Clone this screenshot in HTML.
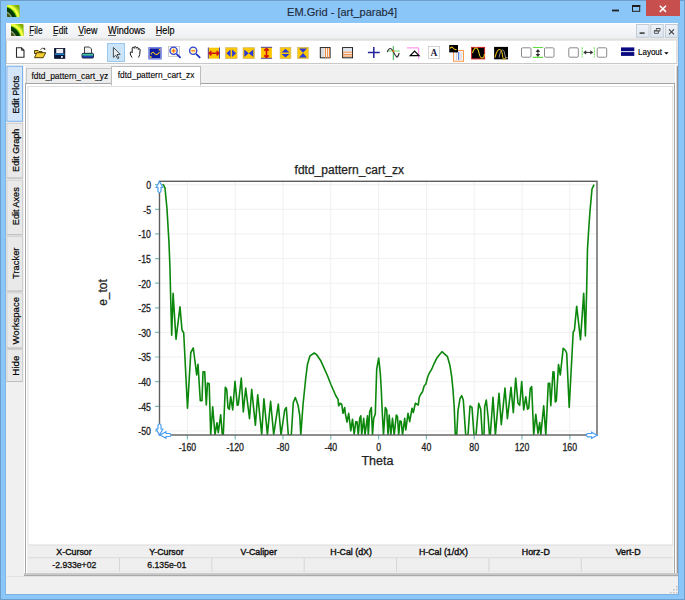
<!DOCTYPE html>
<html><head><meta charset="utf-8"><style>html,body{margin:0;padding:0;width:685px;height:600px;overflow:hidden;background:#8bc6f9;font-family:"Liberation Sans",sans-serif}</style></head><body><svg width="685" height="600" viewBox="0 0 685 600" font-family="Liberation Sans" style="position:absolute;left:0;top:0"><rect x="0" y="0" width="685" height="600" fill="#8bc6f9" /><rect x="0.5" y="0.5" width="684" height="599" fill="none" stroke="#6e9fcc" stroke-width="1" /><g transform="translate(7,5)"><clipPath id="ic5"><rect width="12.5" height="12" rx="0.8"/></clipPath><g clip-path="url(#ic5)"><rect width="13" height="12" fill="#84ac00"/><circle cx="-4" cy="15.5" r="19" fill="#a6d81c"/><circle cx="-4" cy="15.5" r="17.2" fill="#f4ff44"/><circle cx="-4" cy="15.5" r="14.6" fill="#5cc800"/><circle cx="-4" cy="15.5" r="13.5" fill="#063a06"/><circle cx="-4" cy="15.5" r="9.6" fill="#9cab84"/><circle cx="-4" cy="15.5" r="8.5" fill="#46560c"/></g></g><text transform="translate(342,15.8) scale(0.945,1)" font-size="11.7" fill="#1e2b3c" stroke="#1e2b3c" stroke-width="0.15" text-anchor="middle" font-weight="normal" >EM.Grid - [art_parab4]</text><rect x="612" y="9.6" width="7" height="1.8" fill="#202020" /><rect x="632.5" y="5.5" width="7.2" height="5.8" fill="none" stroke="#202020" stroke-width="1" /><rect x="632" y="5" width="8.2" height="2" fill="#202020" /><rect x="646" y="0" width="34" height="16" fill="#c7504f" /><path d="M659.8 5.8L666 11.9M666 5.8L659.8 11.9" stroke="#fff" stroke-width="1.5"/><rect x="6" y="23" width="672" height="571" fill="#f0f0f0" /><rect x="5" y="23" width="1" height="572" fill="#7fb5e8" /><rect x="678" y="23" width="1" height="572" fill="#7ab0e2" /><rect x="5" y="594" width="674" height="1" fill="#7ab0e2" /><defs><linearGradient id="mb" x1="0" y1="0" x2="0" y2="1"><stop offset="0" stop-color="#fbfbfc"/><stop offset="1" stop-color="#eef0f3"/></linearGradient><linearGradient id="mdi" x1="0" y1="0" x2="0" y2="1"><stop offset="0" stop-color="#eef3f9"/><stop offset="1" stop-color="#dde6f0"/></linearGradient></defs><rect x="6" y="23" width="672" height="15" fill="url(#mb)" /><rect x="6" y="23" width="672" height="1" fill="#ffffff" /><defs><linearGradient id="mbb" x1="0" y1="0" x2="0" y2="1"><stop offset="0" stop-color="#eeeeee"/><stop offset="1" stop-color="#d6d6d6"/></linearGradient></defs><rect x="6" y="37.7" width="672" height="3" fill="url(#mbb)" /><g transform="translate(11,24)"><clipPath id="ic24"><rect width="12.5" height="12" rx="0.8"/></clipPath><g clip-path="url(#ic24)"><rect width="13" height="12" fill="#84ac00"/><circle cx="-4" cy="15.5" r="19" fill="#a6d81c"/><circle cx="-4" cy="15.5" r="17.2" fill="#f4ff44"/><circle cx="-4" cy="15.5" r="14.6" fill="#5cc800"/><circle cx="-4" cy="15.5" r="13.5" fill="#063a06"/><circle cx="-4" cy="15.5" r="9.6" fill="#9cab84"/><circle cx="-4" cy="15.5" r="8.5" fill="#46560c"/></g></g><text transform="translate(29.3,34.1) scale(0.8,1)" font-size="10.2" fill="#000" stroke="#000" stroke-width="0.15" text-anchor="start" font-weight="normal" >File</text><text transform="translate(53,34.1) scale(0.84,1)" font-size="10.2" fill="#000" stroke="#000" stroke-width="0.15" text-anchor="start" font-weight="normal" >Edit</text><text transform="translate(78.3,34.1) scale(0.87,1)" font-size="10.2" fill="#000" stroke="#000" stroke-width="0.15" text-anchor="start" font-weight="normal" >View</text><text transform="translate(108,34.1) scale(0.9,1)" font-size="10.2" fill="#000" stroke="#000" stroke-width="0.15" text-anchor="start" font-weight="normal" >Windows</text><text transform="translate(155.8,34.1) scale(0.89,1)" font-size="10.2" fill="#000" stroke="#000" stroke-width="0.15" text-anchor="start" font-weight="normal" >Help</text><rect x="29.3" y="35" width="4" height="1" fill="#555" /><rect x="53" y="35" width="4" height="1" fill="#555" /><rect x="78.3" y="35" width="5.5" height="1" fill="#555" /><rect x="108" y="35" width="8" height="1" fill="#555" /><rect x="155.8" y="35" width="5" height="1" fill="#555" /><rect x="636.5" y="24.5" width="12.5" height="12.8" fill="url(#mdi)" stroke="#c3ccd6" stroke-width="1" /><rect x="650.8" y="24.5" width="12.5" height="12.8" fill="url(#mdi)" stroke="#c3ccd6" stroke-width="1" /><rect x="665.4" y="24.5" width="12.5" height="12.8" fill="url(#mdi)" stroke="#c3ccd6" stroke-width="1" /><rect x="639.6" y="32.3" width="5" height="1.6" fill="#404040" /><path d="M654.4 30.9h4v2.5h-4z M656.4 30.4v-1.9h3.6v2.6h-1.4" fill="none" stroke="#505050" stroke-width="0.9"/><path d="M654 30.2h4.8v1h-4.8zM656 28h4.4v1h-4.4z" fill="#505050"/><path d="M669 29.3L674 34.3M674 29.3L669 34.3" stroke="#404040" stroke-width="1.1"/><rect x="6" y="40.7" width="671" height="23" fill="#ffffff" /><rect x="6" y="63" width="671" height="1" fill="#c8c8c8" /><rect x="6" y="64" width="671" height="1" fill="#f8f8f8" /><rect x="6" y="40.7" width="0.8" height="23" fill="#c9c9c9" /><rect x="676.3" y="40.7" width="1" height="23" fill="#d0d0d0" /><g id="tb">
<!-- new doc 15.7..24.4, 47.3..57.8 -->
<path d="M16.5 47.8h5l2.5 2.5v7h-7.5z" fill="#fff" stroke="#2a2a2a" stroke-width="1.1"/>
<path d="M21.5 47.8v2.5h2.5" fill="none" stroke="#2a2a2a" stroke-width="0.9"/>
<!-- open folder 34..46, 47.7..58.2 -->
<path d="M34.5 50.5h3.5l1 1h3v2h-7.5z" fill="#f0c030" stroke="#3a3000" stroke-width="0.9"/>
<path d="M34.5 57.7l2.2-5h9l-2.5 5z" fill="#f5cf30" stroke="#3a3000" stroke-width="0.9"/>
<path d="M40.5 49.5q2-2.5 4.5-0.5" fill="none" stroke="#333" stroke-width="0.9"/>
<path d="M44.2 47.5l1.6 1.8-2 0.6z" fill="#333"/>
<!-- save 54.2..65.2, 48.1..58.6 -->
<rect x="54.6" y="48.5" width="10.2" height="9.8" fill="#08183a" stroke="#000820" stroke-width="0.8"/>
<rect x="56.2" y="48.9" width="7" height="4.3" fill="#eeeeee"/>
<rect x="55" y="53.6" width="9.4" height="1.2" fill="#2a9cf0"/>
<rect x="61" y="56" width="1.8" height="1.8" fill="#f4f4f4"/>
<!-- printer 81.5..93.9, 46.7..58.4 -->
<path d="M84.5 47h5l2 2v4.5h-7z" fill="#f4f4f4" stroke="#303030" stroke-width="0.9"/>
<rect x="82" y="53.3" width="11.5" height="4.8" rx="1" fill="#2040b0" stroke="#101030" stroke-width="0.8"/>
<rect x="82.5" y="53.8" width="10.5" height="1.8" fill="#40c890"/>
<!-- pointer button -->
<rect x="107.5" y="43.5" width="17" height="18" fill="#cce4f8" stroke="#99c8f0" stroke-width="1"/>
<path d="M113.4 47.4v10l2.3-2.2 2 3.5 1.3-0.7-2-3.4 3.2-0.3z" fill="#e6eef4" stroke="#3a3a3a" stroke-width="0.9" stroke-linejoin="round"/>
<!-- hand 129.8..142.1, 46.4..57.8 -->
<path d="M132 57.5q-1.8-2.5-1.8-4.5 0-1.3 1.2-1.2l0.8 1v-4.5q0.1-1.2 1-1.1 1 0 1 1.2v-0.8q0.1-1.1 1-1 1 0 1 1.1v0.6q0.2-1 1-1 1 0 1 1.2v1q0.2-0.9 1-0.8 1 0.1 0.9 1.3l-0.4 4.5q-0.4 1.6-1.3 3" fill="#fff" stroke="#1a1a1a" stroke-width="1" stroke-linejoin="round"/>
<!-- waveform 147.9..162, 46.7..59.8 -->
<rect x="148.3" y="47.1" width="13.4" height="12.4" fill="#5b6fe8"/>
<rect x="149.3" y="48.1" width="11.4" height="10.4" fill="#0a1aa0" stroke="#9aa4d8" stroke-width="0.8"/>
<path d="M151 54.5q1.5-3.5 3-1.5t3 1.5 2.5-2.5" fill="none" stroke="#f0c020" stroke-width="1.1"/>
<rect x="158.8" y="49" width="1.6" height="1.6" fill="#f0c020"/>
<rect x="150" y="56.2" width="1.6" height="1.6" fill="#f0c020"/>
<!-- zoom in 168..181 -->
<rect x="168.5" y="46.5" width="11" height="10" fill="none" stroke="#c8c8c8" stroke-width="0.9"/>
<line x1="176.5" y1="53.8" x2="180.6" y2="57.8" stroke="#1a30c0" stroke-width="1.7"/>
<circle cx="173.6" cy="50.8" r="3.6" fill="#fff8c0" stroke="#3040d8" stroke-width="1.3"/>
<path d="M171.6 50.8h4M173.6 48.8v4" stroke="#ff7010" stroke-width="1.3"/>
<!-- zoom out -->
<line x1="196.1" y1="53.8" x2="200.2" y2="57.8" stroke="#1a30c0" stroke-width="1.7"/>
<circle cx="193.2" cy="50.8" r="3.6" fill="#fff8c0" stroke="#3040d8" stroke-width="1.3"/>
<path d="M191.2 50.8h4" stroke="#ff8a30" stroke-width="1.5"/>
<!-- A 207.9..219.8 -->
<rect x="208" y="47.7" width="11.8" height="10.9" fill="#ffc800"/>
<path d="M208.3 47.5v11.2M219.5 47.5v11.2" stroke="#3838c0" stroke-width="0.9"/>
<path d="M209.5 53.2h9M211.3 51l-2 2.2 2 2.2M216.7 51l2 2.2-2 2.2" fill="none" stroke="#d01010" stroke-width="1.6"/>
<!-- B 225.5..237.1 -->
<rect x="225.5" y="47.7" width="11.6" height="10.9" fill="#ffc800" stroke="#c8b070" stroke-width="0.6"/>
<path d="M230.5 49.5v7.5l-4-3.75z M232.1 49.5v7.5l4-3.75z" fill="#2a3ad8"/>
<!-- C 243..254.6 -->
<rect x="243" y="47.7" width="11.6" height="10.9" fill="#ffc800" stroke="#c8b070" stroke-width="0.6"/>
<path d="M244.3 49.5v7.5l4.5-3.75z M253.3 49.5v7.5l-4.5-3.75z" fill="#2a3ad8"/>
<!-- D 261.1..271.9 -->
<rect x="261.1" y="47" width="10.8" height="11.6" fill="#ffc800"/>
<path d="M260.9 47.3h11.2M260.9 58.3h11.2" stroke="#3838c0" stroke-width="0.9"/>
<path d="M266.5 48.5v9M264.3 50.7l2.2-2 2.2 2M264.3 55.3l2.2 2 2.2-2" fill="none" stroke="#d01010" stroke-width="1.6"/>
<!-- E 280.1..290.9 -->
<rect x="280.1" y="47.3" width="10.8" height="11.3" fill="#ffc800" stroke="#c8b070" stroke-width="0.6"/>
<path d="M281.5 52.4h8l-4-3.6z M281.5 54h8l-4 3.6z" fill="#2a3ad8"/>
<!-- F 297.6..308.4 -->
<rect x="297.6" y="47.3" width="10.8" height="11.3" fill="#ffc800" stroke="#c8b070" stroke-width="0.6"/>
<path d="M299 48.5h8l-4 4.3z M299 57.4h8l-4-4.3z" fill="#2a3ad8"/>
<!-- G 319.8..330.4 -->
<rect x="320.3" y="47.6" width="9.8" height="10.2" fill="#f4f4f4" stroke="#202020" stroke-width="1"/>
<rect x="321" y="48.5" width="3.5" height="8.5" fill="#dcdcdc"/>
<path d="M325.5 48v10M327.6 48v10M329.5 48v10" stroke="#f08030" stroke-width="0.9"/>
<!-- H 342.1..353 -->
<rect x="342.6" y="47.6" width="9.9" height="10.2" fill="#f4f4f4" stroke="#202020" stroke-width="1"/>
<rect x="343.5" y="48.5" width="8.2" height="3" fill="#dde6ee"/>
<path d="M342.8 52.2h9.6M342.8 54.4h9.6M342.8 56.1h9.6" stroke="#f08030" stroke-width="0.9"/>
<!-- plus -->
<path d="M367.9 52.5h11.9M373.8 47v11" stroke="#23239a" stroke-width="1.5"/>
<!-- wave cross -->
<path d="M387.2 51h12.7" stroke="#70d870" stroke-width="1"/>
<path d="M393.3 46.1v14" stroke="#30b050" stroke-width="1"/>
<path d="M387.2 52q1.5-3.5 3-3.5t3 3q2 4 3.5 5.5 1.5 0 2.5-4" fill="none" stroke="#303030" stroke-width="1.1"/>
<rect x="392.5" y="50.2" width="1.8" height="1.8" fill="#ff7020"/>
<!-- triangle -->
<path d="M406.9 47.9h11.8v11" fill="none" stroke="#ff80f0" stroke-width="1"/>
<path d="M410.2 55.6l4.4-4.4 4.4 4.4z" fill="none" stroke="#000" stroke-width="1.2"/>
<!-- A box -->
<rect x="428.3" y="46.5" width="11.3" height="12" fill="#fff" stroke="#c0c0c0" stroke-width="0.7"/>
<text x="434" y="56.3" font-family="Liberation Serif" font-weight="bold" font-size="9.5" text-anchor="middle" fill="#1a2040">A</text>
<!-- icon 13 -->
<rect x="453.5" y="50.5" width="10" height="10.8" fill="#f4f6fa" stroke="#ff9a50" stroke-width="1"/>
<path d="M456.5 52v8M461 52v8" stroke="#d0d0d0" stroke-width="0.9"/>
<path d="M458.7 52v8" stroke="#4060e0" stroke-width="1"/>
<rect x="449.2" y="45" width="8.8" height="7.4" fill="#000"/>
<path d="M450 48.5q1.5-2.5 3-0.5t3.5 1.5" fill="none" stroke="#e8c020" stroke-width="1.1"/>
<!-- icon 14 -->
<rect x="471.6" y="47.4" width="13" height="11.5" fill="#000" stroke="#d02020" stroke-width="1"/>
<path d="M472.5 53q1.5-5 3.5-5t3 5 3 5 2.5-4" fill="none" stroke="#e8d020" stroke-width="1.1"/>
<!-- icon 15 -->
<rect x="494.1" y="46.9" width="13.9" height="12.4" fill="#000"/>
<path d="M499 57.5q1.5-7.5 3.5-7.5t2.5 5 2.5 2" fill="none" stroke="#909090" stroke-width="1"/>
<path d="M495 57.5q2-8 4.5-8t3 6 3.5 2" fill="none" stroke="#e0b010" stroke-width="1.1"/>
<!-- group boxes -->
<rect x="521.5" y="47.8" width="9.5" height="9.4" rx="1.2" fill="#fff" stroke="#8a8a8a" stroke-width="1"/>
<path d="M532.8 47.5h10.2M532.8 57.3h10.2" stroke="#60e040" stroke-width="1.2"/>
<path d="M537.9 51v4" stroke="#303030" stroke-width="1"/><path d="M535.6 52l2.3-3 2.3 3zM535.6 54l2.3 3 2.3-3z" fill="#303030"/>
<rect x="544.5" y="47.8" width="9.5" height="9.4" rx="1.2" fill="#fff" stroke="#8a8a8a" stroke-width="1"/>
<rect x="568.8" y="47.8" width="9.5" height="9.4" rx="1.2" fill="#fff" stroke="#8a8a8a" stroke-width="1"/>
<path d="M582.2 47.3v10.2M594.3 47.3v10.2" stroke="#60e040" stroke-width="1" stroke-dasharray="2,1"/>
<path d="M585 52.4h6.5" stroke="#303030" stroke-width="1"/><path d="M586.2 50.2l-3 2.2 3 2.2zM590.3 50.2l3 2.2-3 2.2z" fill="#303030"/>
<rect x="597.2" y="47.8" width="9.5" height="9.4" rx="1.2" fill="#fff" stroke="#8a8a8a" stroke-width="1"/>
<!-- layout icon -->
<rect x="621" y="47.4" width="13.3" height="3.8" fill="#0a0a80"/>
<rect x="621" y="52.1" width="13.3" height="3.8" fill="#0a0a80"/>
</g>
<text transform="translate(638,55.2) scale(0.93,1)" font-size="8.6" fill="#000" stroke="#000" stroke-width="0.15" text-anchor="start" font-weight="normal" >Layout</text><path d="M664.2 52.3h4.4l-2.2 2.3z" fill="#000"/><rect x="6.9" y="66.3" width="15.6" height="55" fill="#d3e5f8" stroke="#7db5ec" stroke-width="1" /><text transform="translate(18.5,94.75) rotate(-90) scale(0.915,1)" font-size="9.8" fill="#000" stroke="#000" stroke-width="0.2" text-anchor="middle">Edit Plots</text><rect x="6.9" y="123.4" width="15.6" height="54.7" fill="#e9e9e9" stroke="#cfcfcf" stroke-width="1" /><rect x="7" y="177.6" width="15.5" height="1" fill="#bdbdbd" /><text transform="translate(18.5,150.35) rotate(-90) scale(0.92,1)" font-size="9.8" fill="#000" stroke="#000" stroke-width="0.2" text-anchor="middle">Edit Graph</text><rect x="6.9" y="180.2" width="15.6" height="54.5" fill="#e9e9e9" stroke="#cfcfcf" stroke-width="1" /><rect x="7" y="234.2" width="15.5" height="1" fill="#bdbdbd" /><text transform="translate(18.5,206.25) rotate(-90) scale(0.927,1)" font-size="9.8" fill="#000" stroke="#000" stroke-width="0.2" text-anchor="middle">Edit Axes</text><rect x="6.9" y="236.3" width="15.6" height="54.8" fill="#e9e9e9" stroke="#cfcfcf" stroke-width="1" /><rect x="7" y="290.6" width="15.5" height="1" fill="#bdbdbd" /><text transform="translate(18.5,263.25) rotate(-90) scale(0.959,1)" font-size="9.8" fill="#000" stroke="#000" stroke-width="0.2" text-anchor="middle">Tracker</text><rect x="6.9" y="292.8" width="15.6" height="55.3" fill="#e9e9e9" stroke="#cfcfcf" stroke-width="1" /><rect x="7" y="347.6" width="15.5" height="1" fill="#bdbdbd" /><text transform="translate(18.5,320.75) rotate(-90) scale(0.973,1)" font-size="9.8" fill="#000" stroke="#000" stroke-width="0.2" text-anchor="middle">Workspace</text><rect x="6.9" y="349.5" width="15.6" height="32" fill="#e9e9e9" stroke="#cfcfcf" stroke-width="1" /><rect x="7" y="381" width="15.5" height="1" fill="#bdbdbd" /><text transform="translate(18.5,365.6) rotate(-90) scale(1,1)" font-size="9.8" fill="#000" stroke="#000" stroke-width="0.2" text-anchor="middle">Hide</text><rect x="24" y="66" width="1" height="510" fill="#ffffff" /><rect x="26.5" y="68.5" width="85" height="15.5" fill="#ececec" stroke="#c6c6c6" stroke-width="1" /><text transform="translate(31.5,79.2) scale(0.935,1)" font-size="9" fill="#000" stroke="#000" stroke-width="0.15" text-anchor="start" font-weight="normal" style="stroke-width:0.1px">fdtd_pattern_cart_yz</text><rect x="25.5" y="83.5" width="649" height="490" fill="#ffffff" stroke="#a5a5a5" stroke-width="1" /><rect x="28" y="86.5" width="644.7" height="485" fill="none" stroke="#e0e0e0" stroke-width="1" /><rect x="111.5" y="66.5" width="89" height="18.5" fill="#ffffff" stroke="#bdbdbd" stroke-width="1" /><rect x="112" y="83" width="88" height="3" fill="#ffffff" /><text transform="translate(117.7,78) scale(0.935,1)" font-size="9" fill="#000" stroke="#000" stroke-width="0.15" text-anchor="start" font-weight="normal" style="stroke-width:0.1px">fdtd_pattern_cart_zx</text><defs><clipPath id="pc"><rect x="159.5" y="181.3" width="437.5" height="253.7"/></clipPath></defs><path d="M187.4 181.3V435.0M235.2 181.3V435.0M283.0 181.3V435.0M330.8 181.3V435.0M378.6 181.3V435.0M426.4 181.3V435.0M474.2 181.3V435.0M522.0 181.3V435.0M569.8 181.3V435.0M159.5 184.7H597.0M159.5 209.3H597.0M159.5 233.9H597.0M159.5 258.6H597.0M159.5 283.2H597.0M159.5 307.8H597.0M159.5 332.4H597.0M159.5 357.0H597.0M159.5 381.7H597.0M159.5 406.3H597.0M159.5 430.9H597.0" stroke="#f0f0f0" stroke-width="1" fill="none"/><path d="M187.4 435.0V439.5M235.2 435.0V439.5M283.0 435.0V439.5M330.8 435.0V439.5M378.6 435.0V439.5M426.4 435.0V439.5M474.2 435.0V439.5M522.0 435.0V439.5M569.8 435.0V439.5M155.0 184.7H159.5M155.0 209.3H159.5M155.0 233.9H159.5M155.0 258.6H159.5M155.0 283.2H159.5M155.0 307.8H159.5M155.0 332.4H159.5M155.0 357.0H159.5M155.0 381.7H159.5M155.0 406.3H159.5M155.0 430.9H159.5" stroke="#7fbfbf" stroke-width="1.2" fill="none"/><polyline clip-path="url(#pc)" points="162.4,184.6 163.6,185 165,188 167,209 169,243 170,269 170.6,295 171.7,335.3 173.1,293.3 176,339.3 180,306.7 182,330 183.7,332.7 187.5,408.3 190.8,352.5 193.3,348 196.7,375 198,364.2 200.3,400.8 202,400.8 203,371.7 204.7,371.7 206.3,405 207.5,383 209.2,383.7 210.7,434.7 212.7,406.7 215,434.7 217,422.7 218.3,432.7 220.7,414.7 222.3,434.7 223.3,434.7 225.3,387.3 226.7,389.3 228,408 229.3,409.3 230.7,396.7 232.7,410 235,381.3 237.3,405.3 238.3,404.7 241.3,378 243.3,412 245.7,388 249.5,418.7 251.7,389.3 255.4,425.3 257.7,394.7 261.7,434.7 263.9,398.7 267.4,434.7 270.6,401.3 273.7,434.7 278.3,404 281,435 284.7,410 286.3,407.5 288.3,435 291.3,435 293.3,402.5 295.3,397.5 298,405 299.7,415 300.8,435 303,405 305.8,377.5 307.5,364.2 310,355.8 314.2,353 316.7,354.7 320.8,360.8 324.2,368.3 327.5,375.8 330.8,384.2 333.3,390 335.8,395.8 338,399.2 338.7,405.8 340,403.3 341.7,404.2 343,413.3 344.7,407.5 345.3,413.3 347,422 348.7,413.3 350.8,430.8 352.5,419.2 354.2,434.2 355.8,421.7 357,421.7 358.3,435 359.7,418.3 360.8,415.8 361.7,435 363.7,418.3 365,435 367.5,415.8 368.3,435 369.7,411.7 371.3,407.5 372.5,435 373.7,418.3 375.3,414.2 376.7,369.2 378.7,358 380.3,373.3 381.3,390 382,406.7 382.5,416.7 383.5,435 385.3,407.5 386.7,410 388,435 389.2,415 390.8,435 392.5,418.3 394.2,435 396.3,415 397.5,416.7 398.7,435 400,420.8 401.3,421.7 402.5,435 404.7,418.3 405.8,430 408,413.3 409.7,421.7 412,408.3 413.3,412.5 415.3,403.3 417,404.2 418.3,405 419.2,397.5 420.8,394.2 422.5,391.7 424.2,385.8 425.8,384.2 427.5,377.5 429.2,373.3 431.7,369.2 434.2,363.3 436.7,358.3 439.2,355 442,351.7 444.7,354.2 447.5,356.7 450,365.8 451.7,376.7 453,390 454.2,406.7 455.3,435 456.7,435 458,410.7 460,398.7 461.7,395.7 463.3,400 465.7,435 468,435 470,406 472,407.3 474,435 476,435 478.7,403.3 480.7,409.3 482.3,435 484,435 484.7,406.7 486.3,400 488,416 489.5,435 490.3,435 493,397.3 495.4,435 499,393.3 501.3,424.7 505,388 507.4,418.7 511,387.3 513.3,412.7 515.7,378 518,403.3 519.7,405.3 521.7,381.5 523.7,410 525.8,396.7 527.5,409.2 528.7,408.3 530.3,388.3 531.7,386.7 533.7,435 535.8,414.2 538,433.3 539.7,422.5 540.8,435 543.7,405.8 545.8,435 548.3,383.3 549.7,383.3 550.8,405.8 553,371.7 554,372 555.3,402 556.3,401 558.5,364.5 560.3,375 563.2,348.2 565.5,350.5 566.7,353.3 569.2,407.5 573.2,332 574.4,330.2 576.7,306.2 580.5,339.8 583.7,293.4 585.4,336 586.6,292.5 587.5,248.8 589,225 590,211 592,189 594,184.6" stroke="#0b870b" stroke-width="1.6" fill="none" stroke-linejoin="round"/><rect x="159.5" y="181.3" width="437.5" height="253.7" stroke="#5e5e5e" stroke-width="1.4" fill="none"/><g font-family="Liberation Sans" font-size="10.3" fill="#222" stroke="#222" stroke-width="0.3"><text transform="translate(187.4,450.5) scale(0.85,1)" text-anchor="middle">-160</text><text transform="translate(235.2,450.5) scale(0.85,1)" text-anchor="middle">-120</text><text transform="translate(283.0,450.5) scale(0.85,1)" text-anchor="middle">-80</text><text transform="translate(330.8,450.5) scale(0.85,1)" text-anchor="middle">-40</text><text transform="translate(378.6,450.5) scale(0.85,1)" text-anchor="middle">0</text><text transform="translate(426.4,450.5) scale(0.85,1)" text-anchor="middle">40</text><text transform="translate(474.2,450.5) scale(0.85,1)" text-anchor="middle">80</text><text transform="translate(522.0,450.5) scale(0.85,1)" text-anchor="middle">120</text><text transform="translate(569.8,450.5) scale(0.85,1)" text-anchor="middle">160</text><text transform="translate(151,189.0) scale(0.85,1)" text-anchor="end">0</text><text transform="translate(151,213.6) scale(0.85,1)" text-anchor="end">-5</text><text transform="translate(151,238.2) scale(0.85,1)" text-anchor="end">-10</text><text transform="translate(151,262.9) scale(0.85,1)" text-anchor="end">-15</text><text transform="translate(151,287.5) scale(0.85,1)" text-anchor="end">-20</text><text transform="translate(151,312.1) scale(0.85,1)" text-anchor="end">-25</text><text transform="translate(151,336.7) scale(0.85,1)" text-anchor="end">-30</text><text transform="translate(151,361.3) scale(0.85,1)" text-anchor="end">-35</text><text transform="translate(151,386.0) scale(0.85,1)" text-anchor="end">-40</text><text transform="translate(151,410.6) scale(0.85,1)" text-anchor="end">-45</text><text transform="translate(151,435.2) scale(0.85,1)" text-anchor="end">-50</text></g><text x="349.3" y="173.6" text-anchor="middle" font-family="Liberation Sans" font-size="12" fill="#222" stroke="#222" stroke-width="0.25">fdtd_pattern_cart_zx</text><text x="377.4" y="465" text-anchor="middle" font-family="Liberation Sans" font-size="12.5" fill="#222" stroke="#222" stroke-width="0.25">Theta</text><text transform="translate(106.6,292.5) rotate(-90)" text-anchor="middle" font-family="Liberation Sans" font-size="12" fill="#222" stroke="#222" stroke-width="0.25">e_tot</text><g fill="#fff" stroke="#4a9ff0" stroke-width="1.2"><path d="M159.5 181.5L162.8 187.5L161 187.5L161 191.5Q159.5 193.5 158 191.5L158 187.5L156.2 187.5Z"/><path d="M159.5 435L162.8 429L161 429L161 425Q159.5 423 158 425L158 429L156.2 429Z"/><path d="M160 435L166 431.7L166 433.5L170 433.5Q172 435 170 436.5L166 436.5L166 438.3Z"/><path d="M597.2 435.2L591.6 432.2L591.6 433.5L587.5 433.5Q585.5 435.2 587.5 436.9L591.6 436.9L591.6 438.2Z"/></g><rect x="28" y="545" width="645" height="27" fill="#efefef" /><rect x="28" y="544.5" width="645" height="1" fill="#dcdcdc" /><rect x="28" y="557.3" width="645" height="1" fill="#d9d9d9" /><rect x="28" y="571.5" width="645" height="1" fill="#e2e2e2" /><text transform="translate(74,554.6) scale(0.98,1)" font-size="9" fill="#111" stroke="#111" stroke-width="0.15" text-anchor="middle" font-weight="normal" style="stroke-width:0.4px">X-Cursor</text><text transform="translate(166.36,554.6) scale(0.98,1)" font-size="9" fill="#111" stroke="#111" stroke-width="0.15" text-anchor="middle" font-weight="normal" style="stroke-width:0.4px">Y-Cursor</text><rect x="118.96" y="558" width="1" height="13.5" fill="#d6d6d6" /><text transform="translate(258.72,554.6) scale(0.98,1)" font-size="9" fill="#111" stroke="#111" stroke-width="0.15" text-anchor="middle" font-weight="normal" style="stroke-width:0.4px">V-Caliper</text><rect x="211.32" y="558" width="1" height="13.5" fill="#d6d6d6" /><text transform="translate(351.08,554.6) scale(0.98,1)" font-size="9" fill="#111" stroke="#111" stroke-width="0.15" text-anchor="middle" font-weight="normal" style="stroke-width:0.4px">H-Cal (dX)</text><rect x="303.68" y="558" width="1" height="13.5" fill="#d6d6d6" /><text transform="translate(443.44,554.6) scale(0.98,1)" font-size="9" fill="#111" stroke="#111" stroke-width="0.15" text-anchor="middle" font-weight="normal" style="stroke-width:0.4px">H-Cal (1/dX)</text><rect x="396.04" y="558" width="1" height="13.5" fill="#d6d6d6" /><text transform="translate(535.8,554.6) scale(0.98,1)" font-size="9" fill="#111" stroke="#111" stroke-width="0.15" text-anchor="middle" font-weight="normal" style="stroke-width:0.4px">Horz-D</text><rect x="488.4" y="558" width="1" height="13.5" fill="#d6d6d6" /><text transform="translate(628.16,554.6) scale(0.98,1)" font-size="9" fill="#111" stroke="#111" stroke-width="0.15" text-anchor="middle" font-weight="normal" style="stroke-width:0.4px">Vert-D</text><rect x="580.76" y="558" width="1" height="13.5" fill="#d6d6d6" /><text transform="translate(74.3,568) scale(0.96,1)" font-size="9" fill="#111" stroke="#111" stroke-width="0.15" text-anchor="middle" font-weight="normal" style="stroke-width:0.3px">-2.933e+02</text><text transform="translate(166.8,568) scale(0.96,1)" font-size="9" fill="#111" stroke="#111" stroke-width="0.15" text-anchor="middle" font-weight="normal" style="stroke-width:0.3px">6.135e-01</text><rect x="675" y="64" width="1" height="512" fill="#ffffff" /><rect x="676" y="66" width="1" height="510" fill="#d8d8d8" /><rect x="677" y="66" width="1" height="510" fill="#989898" /><rect x="24" y="573" width="654" height="3" fill="#c9c9c9" /><rect x="24" y="575" width="654" height="1" fill="#a8a8a8" /><rect x="7" y="576" width="671" height="1" fill="#e2e2e2" /><rect x="676" y="586" width="1.5" height="1.5" fill="#c0c0c0" /><rect x="676" y="589" width="1.5" height="1.5" fill="#c0c0c0" /><rect x="673" y="589" width="1.5" height="1.5" fill="#c0c0c0" /><rect x="676" y="592" width="1.5" height="1.5" fill="#c0c0c0" /><rect x="673" y="592" width="1.5" height="1.5" fill="#c0c0c0" /><rect x="670" y="592" width="1.5" height="1.5" fill="#c0c0c0" /></svg></body></html>
